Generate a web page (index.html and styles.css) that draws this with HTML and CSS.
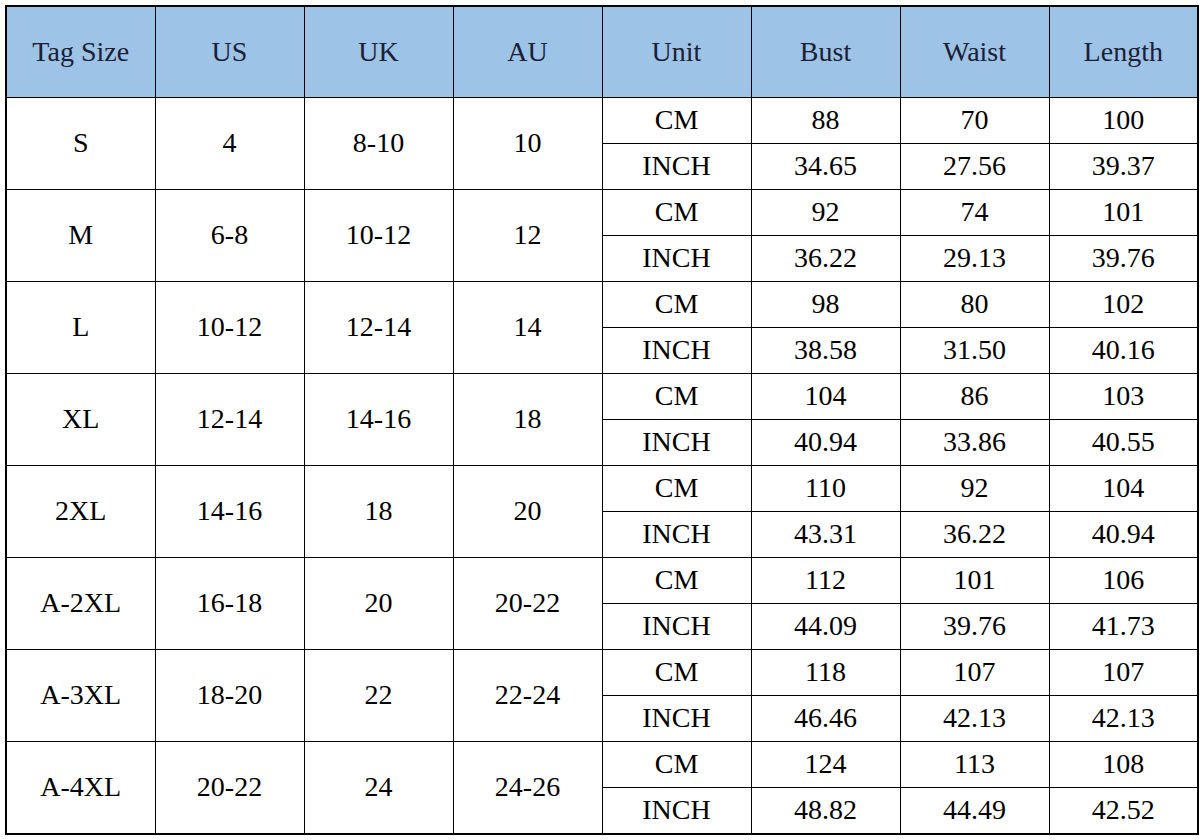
FILE: index.html
```html
<!DOCTYPE html>
<html>
<head>
<meta charset="utf-8">
<link rel="stylesheet" href="styles.css">
</head>
<body>
<table class="size-table">
  <colgroup>
    <col class="c"><col class="c"><col class="c"><col class="c"><col class="c"><col class="c"><col class="c"><col class="c">
  </colgroup>
  <thead>
    <tr class="head">
      <th>Tag Size</th><th>US</th><th>UK</th><th>AU</th><th>Unit</th><th>Bust</th><th>Waist</th><th>Length</th>
    </tr>
  </thead>
  <tbody>
    <tr><td rowspan="2">S</td><td rowspan="2">4</td><td rowspan="2">8-10</td><td rowspan="2">10</td><td>CM</td><td>88</td><td>70</td><td>100</td></tr>
    <tr><td>INCH</td><td>34.65</td><td>27.56</td><td>39.37</td></tr>
    <tr><td rowspan="2">M</td><td rowspan="2">6-8</td><td rowspan="2">10-12</td><td rowspan="2">12</td><td>CM</td><td>92</td><td>74</td><td>101</td></tr>
    <tr><td>INCH</td><td>36.22</td><td>29.13</td><td>39.76</td></tr>
    <tr><td rowspan="2">L</td><td rowspan="2">10-12</td><td rowspan="2">12-14</td><td rowspan="2">14</td><td>CM</td><td>98</td><td>80</td><td>102</td></tr>
    <tr><td>INCH</td><td>38.58</td><td>31.50</td><td>40.16</td></tr>
    <tr><td rowspan="2">XL</td><td rowspan="2">12-14</td><td rowspan="2">14-16</td><td rowspan="2">18</td><td>CM</td><td>104</td><td>86</td><td>103</td></tr>
    <tr><td>INCH</td><td>40.94</td><td>33.86</td><td>40.55</td></tr>
    <tr><td rowspan="2">2XL</td><td rowspan="2">14-16</td><td rowspan="2">18</td><td rowspan="2">20</td><td>CM</td><td>110</td><td>92</td><td>104</td></tr>
    <tr><td>INCH</td><td>43.31</td><td>36.22</td><td>40.94</td></tr>
    <tr><td rowspan="2">A-2XL</td><td rowspan="2">16-18</td><td rowspan="2">20</td><td rowspan="2">20-22</td><td>CM</td><td>112</td><td>101</td><td>106</td></tr>
    <tr><td>INCH</td><td>44.09</td><td>39.76</td><td>41.73</td></tr>
    <tr><td rowspan="2">A-3XL</td><td rowspan="2">18-20</td><td rowspan="2">22</td><td rowspan="2">22-24</td><td>CM</td><td>118</td><td>107</td><td>107</td></tr>
    <tr><td>INCH</td><td>46.46</td><td>42.13</td><td>42.13</td></tr>
    <tr><td rowspan="2">A-4XL</td><td rowspan="2">20-22</td><td rowspan="2">24</td><td rowspan="2">24-26</td><td>CM</td><td>124</td><td>113</td><td>108</td></tr>
    <tr><td>INCH</td><td>48.82</td><td>44.49</td><td>42.52</td></tr>
  </tbody>
</table>
</body>
</html>
```

FILE: styles.css
```css
html, body {
  margin: 0;
  padding: 0;
  background: #ffffff;
}

body {
  padding: 5px 0 0 5px;
}

.size-table {
  border-collapse: collapse;
  table-layout: fixed;
  width: 1191px;
  border: 2px solid #000;
  font-family: "Liberation Serif", "Times New Roman", serif;
  font-size: 28px;
  color: #000;
}

.size-table .c {
  width: 149px;
}

.size-table th,
.size-table td {
  border: 1px solid #000;
  text-align: center;
  vertical-align: middle;
  padding: 0;
  line-height: 1;
}

.size-table th {
  background: #9dc3e6;
  color: #1b2035;
  font-weight: normal;
  height: 90px;
}

.size-table td {
  height: 43px;
  padding-bottom: 2px;
}
```
